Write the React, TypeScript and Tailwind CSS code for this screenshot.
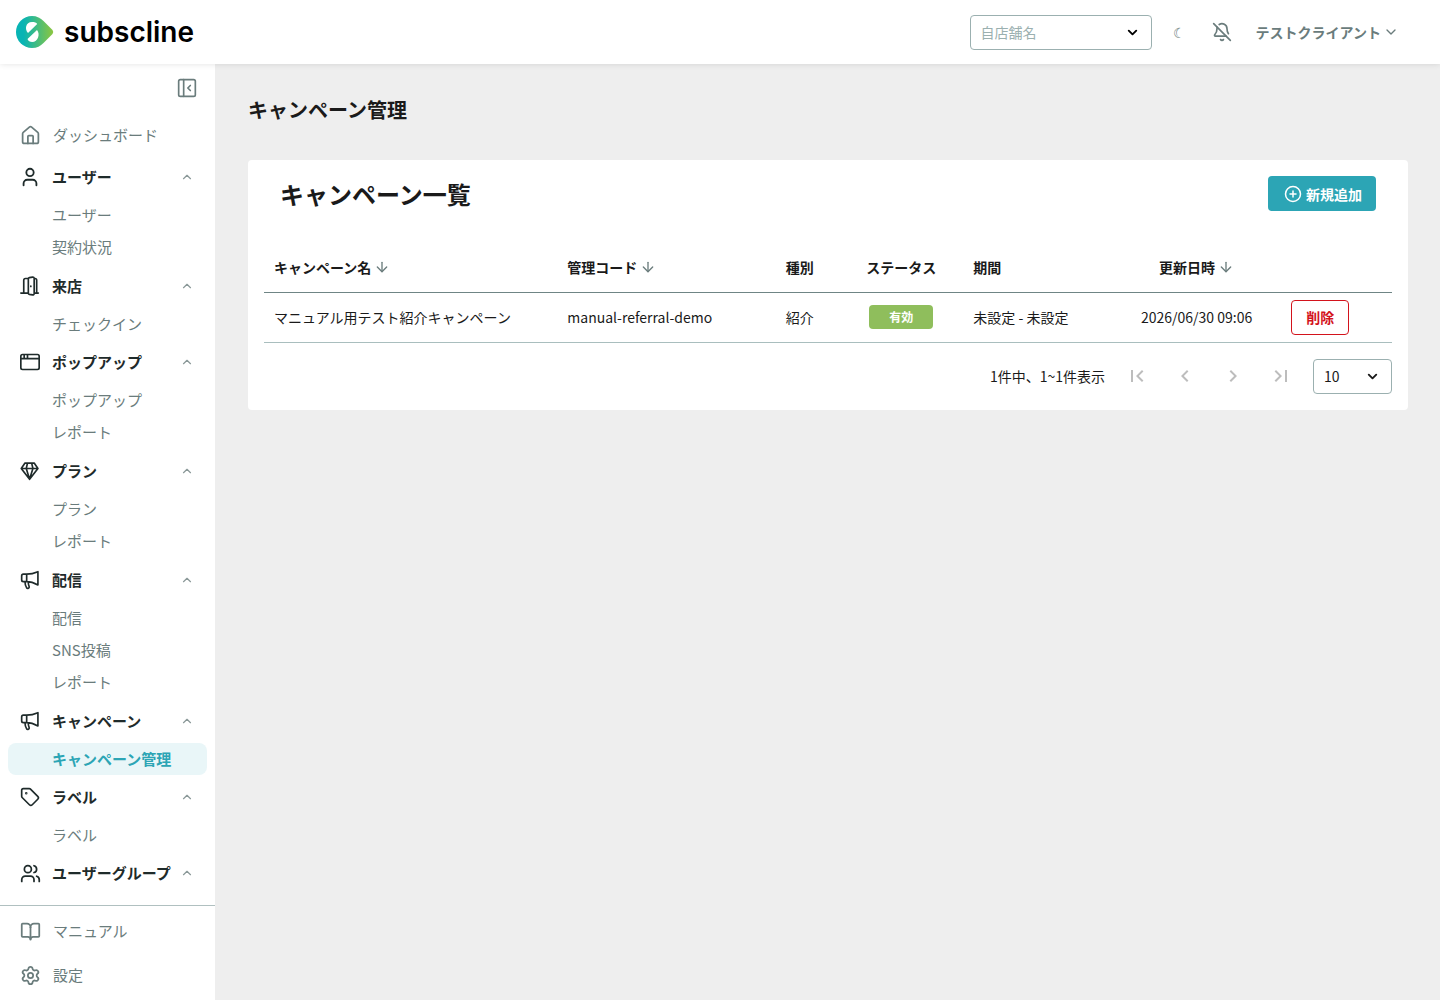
import { useState, type ReactNode } from 'react'
import { ArrowDown, BellOff, BookOpen, ChevronDown, ChevronUp, CirclePlus, House, Settings, Tag, User, Users } from 'lucide-react'

type Group = { label: string; icon: ReactNode; items: string[] }

const strokeProps = { width: 20, height: 20, viewBox: '0 0 24 24', fill: 'none', stroke: 'currentColor', strokeWidth: 2, strokeLinecap: 'round', strokeLinejoin: 'round' } as const

function DoorIcon() {
  return (
    <svg {...strokeProps}>
      <path d="M1 20.500h9M17 20.500h5M4.500 20.500V5A2 2 0 0 1 6.500 3H10M17 3h1a2 2 0 0 1 2 2v15.500M10 20V3.500a1.500 1.500 0 0 1 1.200-1.500l4-.6A1.600 1.600 0 0 1 17 3v18a1.600 1.600 0 0 1-1.800 1.600l-4-.6A1.500 1.500 0 0 1 10 20.500zM13 12v.5" />
    </svg>
  )
}

function WindowIcon() {
  return (
    <svg {...strokeProps}>
      <rect x="1" y="3" width="22" height="18" rx="2" />
      <path d="M1 8h22M5 3.500V7.500M9 3.500V7.500" />
    </svg>
  )
}

function DiamondIcon() {
  return (
    <svg {...strokeProps}>
      <path d="M6 2.500h11l4.500 6.500L11.500 22 1.500 9zM1.500 9h20M9 2.500 7.500 9l4 13 4-13L14 2.500" />
    </svg>
  )
}

function MegaphoneIcon() {
  return (
    <svg {...strokeProps}>
      <path d="M8 5H4a2 2 0 0 0-2 2v5a2 2 0 0 0 2 2h4zM8 5c5 0 9-1 13.500-3v16c-4.500-2.500-8.500-4-13.500-4M6 14c0 3 .5 5 2 7.500 1 1.200 3.500 0 3-1.500-.8-1.800-1.200-3.500-1-5.500" />
    </svg>
  )
}

function Logo() {
  return (
    <a href="#" className="flex items-center gap-2.5 text-black">
      <svg width="38" height="32" viewBox="0 0 38 32">
        <defs>
          <linearGradient id="logo" x1="0" x2="1">
            <stop offset="0.200" stopColor="#08b4b4" />
            <stop offset="1" stopColor="#8cc63f" />
          </linearGradient>
        </defs>
        <path fill="url(#logo)" d="M16 0c5 0 8.500 2 11.500 5l9 9q1.500 2 0 4l-9 9c-3 3-6.500 5-11.500 5a16 16 0 0 1 0-32z" />
        <path fill="#fff" d="M12 17C8.500 13.500 9.500 6 16 6c2.500 0 4.500.6 5.200 2zM21 14c3.500 4 1 12-4.800 12-2.200 0-4.200-1-4.700-3z" />
      </svg>
      <span className="font-[Inter] text-[28px] leading-8 font-semibold">subscline</span>
    </a>
  )
}

const GROUPS: Group[] = [
  { label: 'ユーザー', icon: <User size={22} className="shrink-0" />, items: ['ユーザー', '契約状況'] },
  { label: '来店', icon: <DoorIcon />, items: ['チェックイン'] },
  { label: 'ポップアップ', icon: <WindowIcon />, items: ['ポップアップ', 'レポート'] },
  { label: 'プラン', icon: <DiamondIcon />, items: ['プラン', 'レポート'] },
  { label: '配信', icon: <MegaphoneIcon />, items: ['配信', 'SNS投稿', 'レポート'] },
  { label: 'キャンペーン', icon: <MegaphoneIcon />, items: ['キャンペーン管理'] },
  { label: 'ラベル', icon: <Tag size={20} />, items: ['ラベル'] },
  { label: 'ユーザーグループ', icon: <Users size={21} className="shrink-0" />, items: [] },
]

function Sidebar() {
  const [closed, setClosed] = useState<string[]>([])

  const toggle = (label: string) => {
    setClosed((prev) => (prev.includes(label) ? prev.filter((l) => l !== label) : [...prev, label]))
  }

  return (
    <aside className="flex w-[215px] shrink-0 flex-col bg-white text-[15px] text-[#6a7c7c]">
      <div className="flex h-12 shrink-0 items-center justify-end pr-[18px]">
        <button aria-label="メニューを閉じる">
          <svg {...strokeProps}>
            <rect x="2" y="2" width="20" height="20" rx="2" />
            <path d="M8 2v20M16 9l-3 3 3 3" />
          </svg>
        </button>
      </div>
      <nav className="min-h-0 flex-1 overflow-hidden pt-px">
        <a href="#" className="flex h-11 items-center gap-3 pl-5">
          <House size={21} />
          ダッシュボード
        </a>
        {GROUPS.map((g) => (
          <div key={g.label} className={g.items.length > 1 ? 'pb-[3px]' : 'pb-0.5'}>
            <button onClick={() => toggle(g.label)} className="flex h-10 w-full items-center gap-3 pr-[21px] pl-5 font-bold text-[#1f2b2b]">
              <span className="flex w-5 shrink-0 justify-center">{g.icon}</span>
              <span className="min-w-0 flex-1 text-left whitespace-nowrap">{g.label}</span>
              <ChevronUp size={14} className="shrink-0 text-[#8a9898]" />
            </button>
            {!closed.includes(g.label) && (
              <div className="pt-0.5">
                {g.items.map((item) => (
                  <a
                    key={item}
                    href="#"
                    className={`mx-2 flex h-8 items-center rounded-lg pl-11 ${item === 'キャンペーン管理' ? 'bg-[#e9f6f8] font-bold text-[#2ca5b5]' : ''}`}
                  >
                    {item}
                  </a>
                ))}
              </div>
            )}
          </div>
        ))}
      </nav>
      <div className="h-[95px] shrink-0 border-t border-[#b0c0c0] pt-[3px]">
        <a href="#" className="flex h-11 items-center gap-3 pl-5">
          <BookOpen size={21} />
          マニュアル
        </a>
        <a href="#" className="flex h-11 items-center gap-3 pl-5">
          <Settings size={21} />
          設定
        </a>
      </div>
    </aside>
  )
}

function SortHeader({ children }: { children: ReactNode }) {
  return (
    <button className="inline-flex items-center gap-[3px] font-bold">
      {children}
      <ArrowDown size={16} className="text-[#6a7c7c]" />
    </button>
  )
}

function PageButton({ label, d }: { label: string; d: string }) {
  return (
    <button aria-label={label} disabled className="flex size-12 items-center justify-center text-[#bdbdbd]">
      <svg width="24" height="24" viewBox="0 0 24 24" fill="currentColor">
        <path d={d} />
      </svg>
    </button>
  )
}

function Campaigns() {
  return (
    <section className="mt-9 rounded bg-white p-4">
      <div className="flex items-start justify-between px-4">
        <h2 className="text-2xl leading-9 font-bold">キャンペーン一覧</h2>
        <button className="flex h-[35px] items-center gap-1 rounded bg-[#2ca5b5] pr-3.5 pl-4 text-sm font-bold text-white">
          <CirclePlus size={18} />
          新規追加
        </button>
      </div>

      <table className="mt-[30px] w-full table-fixed text-left text-sm">
        <colgroup>
          <col className="w-[26%]" />
          <col className="w-[18%]" />
          <col className="w-[7%]" />
          <col className="w-[11%]" />
          <col className="w-[13%]" />
          <col className="w-[15%]" />
          <col className="w-[10%]" />
        </colgroup>
        <thead>
          <tr className="h-[50px] border-b border-[#6f8585] whitespace-nowrap">
            <th className="px-2.5"><SortHeader>キャンペーン名</SortHeader></th>
            <th className="px-2.5"><SortHeader>管理コード</SortHeader></th>
            <th className="text-center">種別</th>
            <th className="text-center">ステータス</th>
            <th className="px-2.5">期間</th>
            <th className="pl-1 text-center"><SortHeader>更新日時</SortHeader></th>
            <th aria-label="操作" />
          </tr>
        </thead>
        <tbody>
          <tr className="h-[50px] border-b border-[#a9bebe] whitespace-nowrap">
            <td className="px-2.5">マニュアル用テスト紹介キャンペーン</td>
            <td className="px-2.5">manual-referral-demo</td>
            <td className="text-center">紹介</td>
            <td className="text-center">
              <span className="inline-block w-16 rounded bg-[#8fbe5c] text-xs leading-6 font-bold text-white">有効</span>
            </td>
            <td className="px-2.5">未設定 - 未設定</td>
            <td className="pl-1 text-center">2026/06/30 09:06</td>
            <td className="pl-3">
              <button className="h-[35px] w-[58px] rounded border border-[#d3131c] font-bold text-[#d3131c]">削除</button>
            </td>
          </tr>
        </tbody>
      </table>

      <div className="mt-4 flex h-[35px] items-center justify-end text-sm">
        <span className="mr-2">1件中、1~1件表示</span>
        <PageButton label="最初のページ" d="M18.41 16.59 13.82 12l4.590-4.590L17 6l-6 6 6 6zM6 6h2v12H6z" />
        <PageButton label="前のページ" d="M15.410 7.410 14 6l-6 6 6 6 1.410-1.410L10.830 12z" />
        <PageButton label="次のページ" d="M10 6 8.590 7.410 13.170 12l-4.580 4.590L10 18l6-6z" />
        <PageButton label="最後のページ" d="M5.590 7.410 10.180 12l-4.590 4.590L7 18l6-6-6-6zM16 6h2v12h-2z" />
        <div className="relative ml-2">
          <select aria-label="表示件数" className="h-[35px] w-[79px] appearance-none rounded border border-[#9bb0b0] bg-white pl-2.5">
            <option>10</option>
            <option>25</option>
            <option>50</option>
          </select>
          <ChevronDown size={15} strokeWidth={3} className="pointer-events-none absolute top-2.5 right-3" />
        </div>
      </div>
    </section>
  )
}

export default function App() {
  return (
    <div lang="ja" className="flex h-screen flex-col bg-[#eee] font-['Noto_Sans_CJK_JP',sans-serif] text-[#1a1a1a]">
      <header className="z-10 flex h-16 shrink-0 items-center justify-between bg-white pr-[41px] pl-4 text-[#6a7c7c] shadow-[0_0_6px_rgba(0,0,0,0.12)]">
        <Logo />
        <div className="flex items-center">
          <div className="relative">
            <select aria-label="自店舗名" className="h-[35px] w-[182px] appearance-none rounded border border-[#9bb0b0] bg-white pl-2.5 text-sm text-[#9bb0b0]">
              <option>自店舗名</option>
            </select>
            <ChevronDown size={15} strokeWidth={3} className="pointer-events-none absolute top-2.5 right-3 text-black" />
          </div>
          <button aria-label="テーマ" className="ml-5 w-4 text-sm">☾</button>
          <button aria-label="通知" className="ml-6">
            <BellOff size={20} />
          </button>
          <button className="ml-6 flex items-center gap-0.5 text-sm font-bold">
            テストクライアント
            <ChevronDown size={16} />
          </button>
        </div>
      </header>
      <div className="flex min-h-0 flex-1">
        <Sidebar />
        <main className="min-w-0 flex-1 overflow-auto py-8 pr-8 pl-[33px]">
          <h1 className="text-xl leading-7 font-bold">キャンペーン管理</h1>
          <Campaigns />
        </main>
      </div>
    </div>
  )
}
